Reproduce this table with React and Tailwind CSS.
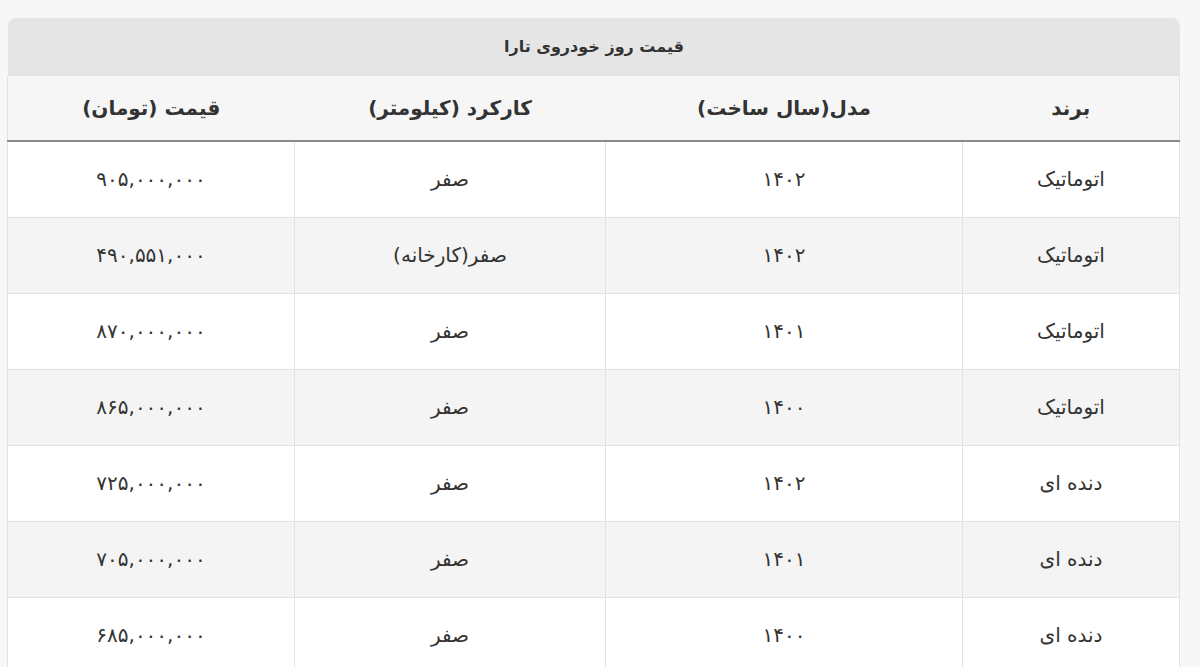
const rows = [
  { brand: 'اتوماتیک', model: '۱۴۰۲', km: 'صفر', price: '۹۰۵,۰۰۰,۰۰۰' },
  { brand: 'اتوماتیک', model: '۱۴۰۲', km: 'صفر(کارخانه)', price: '۴۹۰,۵۵۱,۰۰۰' },
  { brand: 'اتوماتیک', model: '۱۴۰۱', km: 'صفر', price: '۸۷۰,۰۰۰,۰۰۰' },
  { brand: 'اتوماتیک', model: '۱۴۰۰', km: 'صفر', price: '۸۶۵,۰۰۰,۰۰۰' },
  { brand: 'دنده ای', model: '۱۴۰۲', km: 'صفر', price: '۷۲۵,۰۰۰,۰۰۰' },
  { brand: 'دنده ای', model: '۱۴۰۱', km: 'صفر', price: '۷۰۵,۰۰۰,۰۰۰' },
  { brand: 'دنده ای', model: '۱۴۰۰', km: 'صفر', price: '۶۸۵,۰۰۰,۰۰۰' },
];

const font = { fontFamily: '"DejaVu Sans", "Noto Sans", sans-serif' };

export default function App() {
  return (
    <div className="min-h-[667px] bg-[#f7f7f7] pt-[18px] pl-[8px] pr-[20px] overflow-hidden" style={font}>
      <div dir="rtl" className="w-[1172px] text-[#333]">
        <div className="h-[58px] flex items-center justify-center bg-[#e5e5e5] rounded-t-[8px] text-[16px] font-bold text-[#333]">
          قیمت روز خودروی تارا
        </div>
        <table className="w-full border-collapse table-fixed">
          <colgroup>
            <col className="w-[217px]" />
            <col className="w-[357px]" />
            <col className="w-[311px]" />
            <col className="w-[287px]" />
          </colgroup>
          <thead>
            <tr className="h-[65px] bg-[#f6f6f6] border-b-2 border-[#8a8a8a] border-x border-x-[#e2e2e2]">
              <th className="text-[20px] font-bold text-center">برند</th>
              <th className="text-[20px] font-bold text-center">مدل(سال ساخت)</th>
              <th className="text-[20px] font-bold text-center">کارکرد (کیلومتر)</th>
              <th className="text-[20px] font-bold text-center">قیمت (تومان)</th>
            </tr>
          </thead>
          <tbody>
            {rows.map((r, i) => (
              <tr key={i} className={i % 2 === 1 ? 'h-[76px] bg-[#f4f4f4]' : 'h-[76px] bg-white'}>
                <td className="border border-[#e2e2e2] text-center text-[20px]">{r.brand}</td>
                <td className="border border-[#e2e2e2] text-center text-[20px]">{r.model}</td>
                <td className="border border-[#e2e2e2] text-center text-[20px]">{r.km}</td>
                <td className="border border-[#e2e2e2] text-center text-[20px]">{r.price}</td>
              </tr>
            ))}
          </tbody>
        </table>
      </div>
    </div>
  );
}
